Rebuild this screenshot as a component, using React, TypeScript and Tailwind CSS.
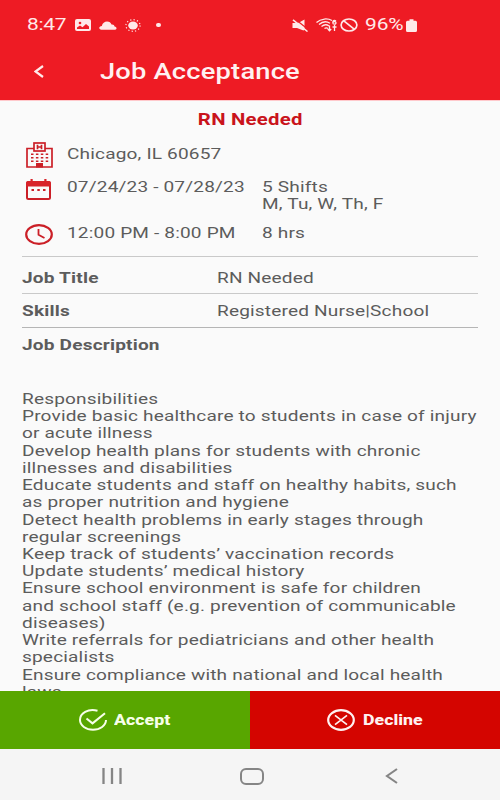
import type { ReactNode } from "react";
import clsx from "clsx";

const details = [
  { label: "Job Title", value: "RN Needed", className: "h-[37px] pt-[13px]" },
  { label: "Skills", value: "Registered Nurse|School", className: "h-[34px] pt-[9px]" },
];

const description = [
  "Responsibilities",
  "Provide basic healthcare to students in case of injury",
  "or acute illness",
  "Develop health plans for students with chronic",
  "illnesses and disabilities",
  "Educate students and staff on healthy habits, such",
  "as proper nutrition and hygiene",
  "Detect health problems in early stages through",
  "regular screenings",
  "Keep track of students’ vaccination records",
  "Update students’ medical history",
  "Ensure school environment is safe for children",
  "and school staff (e.g. prevention of communicable",
  "diseases)",
  "Write referrals for pediatricians and other health",
  "specialists",
  "Ensure compliance with national and local health",
  "laws",
];

// wide text, stretched from its left edge
const Wide = ({ className, children }: { className?: string; children: ReactNode }) => (
  <span className={clsx("block shrink-0 origin-left whitespace-nowrap scale-x-[1.27]", className)}>
    {children}
  </span>
);

const StatusBar = () => (
  <div className="flex h-[50px] items-center pl-[27px] text-[16.5px] text-[#ffe9e9]">
    <Wide className="mr-[16px] w-[32px] tracking-[-0.2px]">8:47</Wide>
    <svg className="h-[12px] w-[16px]" viewBox="0 0 16 12" preserveAspectRatio="none">
      <rect width="16" height="12" rx="2" fill="currentColor" />
      <circle cx="5" cy="4" r="1.3" fill="#ee1c25" />
      <path d="M2 10V8.4L5 6.5L7.5 8.3L11 5L14 7.5V10Z" fill="#ee1c25" />
    </svg>
    <svg className="ml-[8px] h-[9px] w-[18px]" viewBox="0 0 19 9" preserveAspectRatio="none">
      <path
        d="M2.5 8.7C-.7 8.5-.4 5.2 3 5C3.5 2 6 .5 8.5 .5C11 .5 12.5 1.8 13.2 3.5C15.2 3.2 16.2 4.3 16.4 5.4C19.2 5.8 19 8.5 17 8.7Z"
        fill="currentColor"
      />
    </svg>
    <svg className="ml-[8px] h-[13px] w-[16px]" viewBox="0 0 16 13">
      <ellipse cx="8" cy="6.5" rx="4.8" ry="4" fill="currentColor" />
      <ellipse
        cx="8"
        cy="6.5"
        rx="7.1"
        ry="5.8"
        fill="none"
        stroke="currentColor"
        strokeWidth="1.2"
        strokeDasharray="1.2 2.2"
      />
    </svg>
    <div className="ml-[15px] h-[4px] w-[5px] rounded-full bg-[#ffe9e9]" />
    <svg className="ml-[131px] h-[13px] w-[17px]" viewBox="0 0 17 13">
      <path d="M.5 4H5L8 3L12.500 .5V10.500L11.500 11.500L5 9H.5Z" fill="currentColor" />
      <path d="M2 -.7L17 11" stroke="#ee1c25" strokeWidth="1.3" />
      <path d="M1 .8L15.500 12.500" stroke="currentColor" strokeWidth="1.5" />
    </svg>
    <svg
      className="ml-[7px] h-[14px] w-[21px]"
      viewBox="0 0 21 14"
      fill="none"
      stroke="currentColor"
      strokeWidth="1.3"
    >
      <path d="M.5 4.5C5 .2 12 .2 16 2.5M3 6.5C6.500 3.4 11 3.4 14 5.200M5.500 8.500C8 6.500 11 6.500 13 8M8.500 10.500C9.500 9.700 11 9.700 12 10.500" />
      <path d="M13.500 7.500V12.500M11.800 11L13.500 12.800L15.200 11M18.500 13V7M16.500 9H20.500M20 3C18 1.500 16.800 3 16.800 4.700C16.800 6.700 20 6.700 20 4.800C20 3.500 17.500 3.300 17 4.500" />
    </svg>
    <svg
      className="ml-[3px] h-[14px] w-[18px]"
      viewBox="0 0 18 14"
      fill="none"
      stroke="currentColor"
      strokeWidth="1.7"
    >
      <ellipse cx="9" cy="7" rx="7.900" ry="6" />
      <path d="M3.500 2.700L14.500 11.300" />
    </svg>
    <Wide className="ml-[7px] w-[32px] tracking-[-0.1px]">96%</Wide>
    <svg className="ml-[9px] h-[13px] w-[11px]" viewBox="0 0 11 13">
      <path
        d="M3.500 .3H7.500V1.700H9.500Q11 1.700 11 3.200V11.500Q11 13 9.500 13H1.500Q0 13 0 11.500V3.200Q0 1.700 1.500 1.700H3.500Z"
        fill="currentColor"
      />
    </svg>
  </div>
);

const HospitalIcon = () => (
  <svg className="h-[26px] w-[27px]" viewBox="0 0 27 26" fill="none" stroke="#cb1f27" strokeWidth="1.700">
    <path d="M8 6.500H1V25H26V6.500H19" />
    <rect x="8" y="1" width="11" height="8" />
    <path d="M11.500 2.700V7.300M15.500 2.700V7.300M11.500 5H15.500" />
    <path d="M5 12.200H22.500M5 15.700H22.500M5 19.200H22.500" strokeWidth="1.600" strokeDasharray="2.500 2.400" />
    <rect x="10" y="21" width="7" height="4.500" fill="#cb1f27" stroke="none" />
  </svg>
);

const CalendarIcon = () => (
  <svg className="h-[21px] w-[25px]" viewBox="0 0 25 21">
    <rect x="1" y="3" width="23" height="17" rx="1.500" fill="none" stroke="#cb1f27" strokeWidth="2" />
    <path d="M.2 3.500Q.2 2 2 2H4.500V0H6.700V2H18.300V0H20.500V2H23Q24.800 2 24.800 3.500V7.500H.2Z" fill="#d8232a" />
    <path d="M5.500 11H8M11.300 11H13.800M17 11H19.500" stroke="#cb1f27" strokeWidth="2" />
  </svg>
);

const ClockIcon = () => (
  <svg className="h-[21px] w-[28px]" viewBox="0 0 28 21" fill="none" stroke="#cb1f27" strokeWidth="2.200">
    <ellipse cx="14" cy="10.500" rx="12.800" ry="9.300" />
    <path d="M13.500 5V10.800L19.500 14" strokeWidth="1.800" />
  </svg>
);

const AcceptIcon = () => (
  <svg className="h-[22px] w-[28px]" viewBox="0 0 28 22" fill="none" stroke="#f7ffe9" strokeWidth="2">
    <path d="M18.500 1.800C9-.8 1 4.500 1 11C1 16.500 7 20.800 14 20.800C21 20.800 27 16.500 27 11" />
    <path d="M7.500 9.500L13.500 14.300L26 4.200" strokeWidth="2.100" />
  </svg>
);

const DeclineIcon = () => (
  <svg className="h-[22px] w-[28px]" viewBox="0 0 28 22" fill="none" stroke="#fff1f1" strokeWidth="2.200">
    <ellipse cx="14" cy="11" rx="12.800" ry="9.800" />
    <path d="M8 6.300L20 15.700M20 6.300L8 15.700" strokeWidth="1.700" />
  </svg>
);

const App = () => {
  return (
    <div className="flex h-[800px] w-[500px] flex-col overflow-hidden bg-[#fafafa] font-[Roboto,sans-serif] text-[15px] leading-[17.220px] tracking-[0.130px] text-[#5c5c5c]">
      {/* HEADER */}
      <header className="h-[100px] shrink-0 bg-[#ee1b24]">
        <StatusBar />
        <div className="flex h-[42px] items-center pl-[34px]">
          <svg className="h-[13px] w-[10px]" viewBox="0 0 10 13" fill="none" stroke="#ffeaea" strokeWidth="2.200">
            <path d="M9 1L1.500 6.500L9 12" />
          </svg>
          <Wide className="ml-[56px] pt-[2px] text-[21.500px] font-medium tracking-[0.150px] text-[#fff1f1]">
            Job Acceptance
          </Wide>
        </div>
      </header>

      {/* CONTENT */}
      <main className="h-[591px] shrink-0 overflow-hidden border-t border-[#ffc9cc] px-[22px]">
        <h1 className="flex h-[38px] items-center justify-center text-[16px] font-bold tracking-[0.200px] text-[#c9131b]">
          <span className="scale-x-[1.27]">RN Needed</span>
        </h1>
        <div className="flex h-[38px] pt-[3px] pl-[4px]">
          <HospitalIcon />
          <Wide className="ml-[14px] pt-[4px]">Chicago, IL 60657</Wide>
        </div>
        <div className="flex h-[45px] pt-[2px] pl-[4px]">
          <CalendarIcon />
          <Wide className="ml-[16px] w-[195px]">07/24/23 - 07/28/23</Wide>
          <Wide>
            5 Shifts
            <br />
            M, Tu, W, Th, F
          </Wide>
        </div>
        <div className="flex h-[34px] pt-[2px] pl-[3px]">
          <ClockIcon />
          <Wide className="ml-[14px] w-[195px] pt-px">12:00 PM - 8:00 PM</Wide>
          <Wide className="pt-px">8 hrs</Wide>
        </div>

        {details.map((item) => (
          <div key={item.label} className={clsx("flex border-t border-[#c9c9c9]", item.className)}>
            <Wide className="w-[195px] font-bold tracking-[0.150px]">{item.label}</Wide>
            <Wide>{item.value}</Wide>
          </div>
        ))}
        <div className="h-[64px] border-t border-[#b5b5b5] pt-[9px]">
          <Wide className="font-bold tracking-[0.150px]">Job Description</Wide>
        </div>
        <div>
          {description.map((line) => (
            <Wide key={line}>{line}</Wide>
          ))}
        </div>
      </main>

      {/* ACTIONS */}
      <div className="flex h-[58px] shrink-0 text-[14px] font-extrabold tracking-normal">
        <button className="flex w-1/2 items-center bg-[#58a600] pl-[79px] text-[#f7ffe9]">
          <AcceptIcon />
          <Wide className="ml-[7px] pt-[2px]">Accept</Wide>
        </button>
        <button className="flex w-1/2 items-center bg-[#d40500] pl-[77px] text-[#fff1f1]">
          <DeclineIcon />
          <Wide className="ml-[8px] pt-[2px]">Decline</Wide>
        </button>
      </div>

      {/* NAVIGATION */}
      <nav className="flex grow items-center bg-[#f5f5f5] pt-[3px] pl-[102px] text-[#858585]">
        <svg className="h-[16px] w-[20px]" viewBox="0 0 20 16" stroke="currentColor" strokeWidth="2.300">
          <path d="M1.500 0V16M10 0V16M18.500 0V16" />
        </svg>
        <svg className="ml-[118px] h-[17px] w-[24px]" viewBox="0 0 24 17" fill="none" stroke="currentColor" strokeWidth="2">
          <rect x="1" y="1" width="22" height="15" rx="5" />
        </svg>
        <svg className="ml-[121px] h-[16px] w-[13px]" viewBox="0 0 13 16" fill="none" stroke="currentColor" strokeWidth="2.100">
          <path d="M12 1L2 8L12 15" />
        </svg>
      </nav>
    </div>
  );
};

export default App;
